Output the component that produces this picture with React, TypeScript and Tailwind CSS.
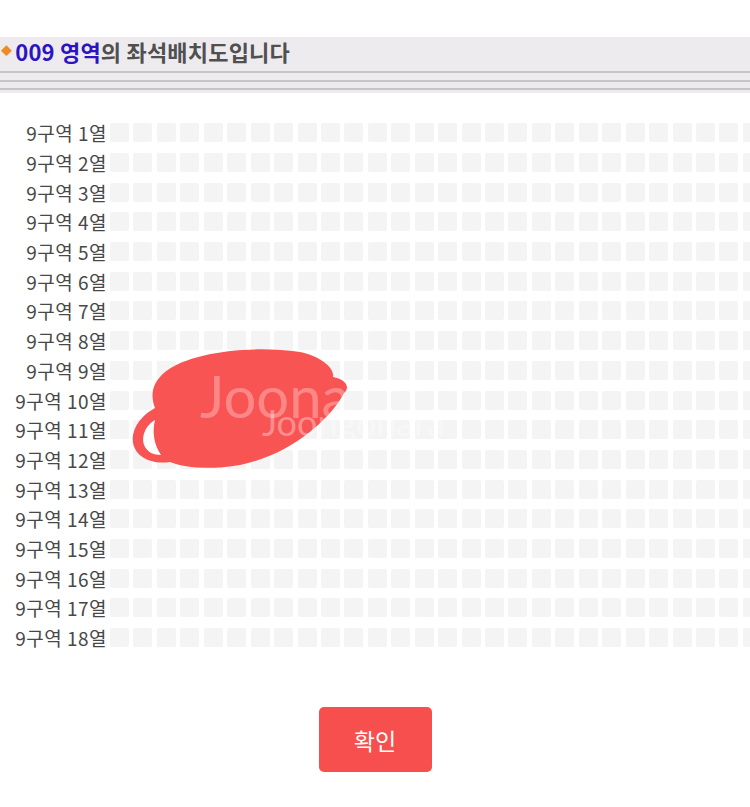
import React from "react";

const rows = Array.from({ length: 18 }, (_, i) => i + 1);
const seats = Array.from({ length: 28 }, (_, i) => i);

const blob =
  "M 165 372 C 190 352, 250 345, 300 352 C 320 356, 335 368, 333 377 C 345 379, 351 387, 344 393 C 330 420, 290 455, 240 465 C 210 470, 185 468, 170 462 C 150 465, 130 455, 133 435 C 136 420, 148 412, 155 408 C 150 395, 152 383, 165 372 Z";

function Scribble() {
  return (
    <svg
      className="absolute left-0 top-0 pointer-events-none"
      width="750"
      height="807"
      viewBox="0 0 750 807"
    >
      <defs>
        <clipPath id="blobClip">
          <path d={blob} />
        </clipPath>
      </defs>
      <path d={blob} fill="#f95454" />
      <path
        d="M 145 447 C 140 437, 146 425, 155 420 C 152 432, 154 445, 161 455 C 153 455, 148 452, 145 447 Z"
        fill="#ffffff"
      />
      <text
        x="200"
        y="418"
        fill="#ffffff"
        fillOpacity="0.3"
        clipPath="url(#blobClip)"
        fontFamily="Lato, 'Open Sans', sans-serif"
        fontSize="58"
      >
        Joona
      </text>
      <text
        x="262"
        y="436"
        fill="#ffffff"
        fillOpacity="0.35"
        fontFamily="Lato, 'Open Sans', sans-serif"
        fontSize="36"
      >
        Joongonara
      </text>
    </svg>
  );
}

export default function App() {
  return (
    <div className="relative w-[750px] h-[807px] bg-white overflow-hidden font-['Noto_Sans_CJK_KR',sans-serif]">
      {/* 상단 타이틀 */}
      <div className="pt-[37px]">
        <div className="bg-[#eeebef] h-[56px] flex flex-col">
          <div className="flex items-center h-[27px] pl-[1px] text-[22px] font-bold leading-none tracking-[0.2px]">
            <span className="text-[#f08a24] text-[11px] mr-[3px]">◆</span>
            <span className="text-[#2b14c2]">009 영역</span>
            <span className="text-[#505050]">의 좌석배치도입니다</span>
          </div>
          <div className="mt-[7px] h-[2px] bg-[#c6c4c7]" />
          <div className="mt-[6.5px] h-[2px] bg-[#c6c4c7]" />
          <div className="mt-[6.5px] h-[2px] bg-[#c6c4c7]" />
        </div>
      </div>

      {/* 좌석 */}
      <div className="mt-[25px] flex flex-col">
        {rows.map((r) => (
          <div key={r} className="flex items-center h-[29.7px]">
            <div className="w-[107px] shrink-0 text-right text-[19px] text-[#484848] leading-none tracking-[0.5px] whitespace-nowrap">
              9구역 {r}열
            </div>
            <div className="ml-[3px] flex gap-[4.44px]">
              {seats.map((s) => (
                <div key={s} className="w-[19px] h-[19px] shrink-0 rounded-[2px] bg-[#f4f4f5]" />
              ))}
            </div>
          </div>
        ))}
      </div>

      <div className="mt-[55px] flex justify-center">
        <button className="w-[113px] h-[65px] rounded-[5px] bg-[#f74f4d] text-white text-[23px]">
          확인
        </button>
      </div>

      <Scribble />
    </div>
  );
}
